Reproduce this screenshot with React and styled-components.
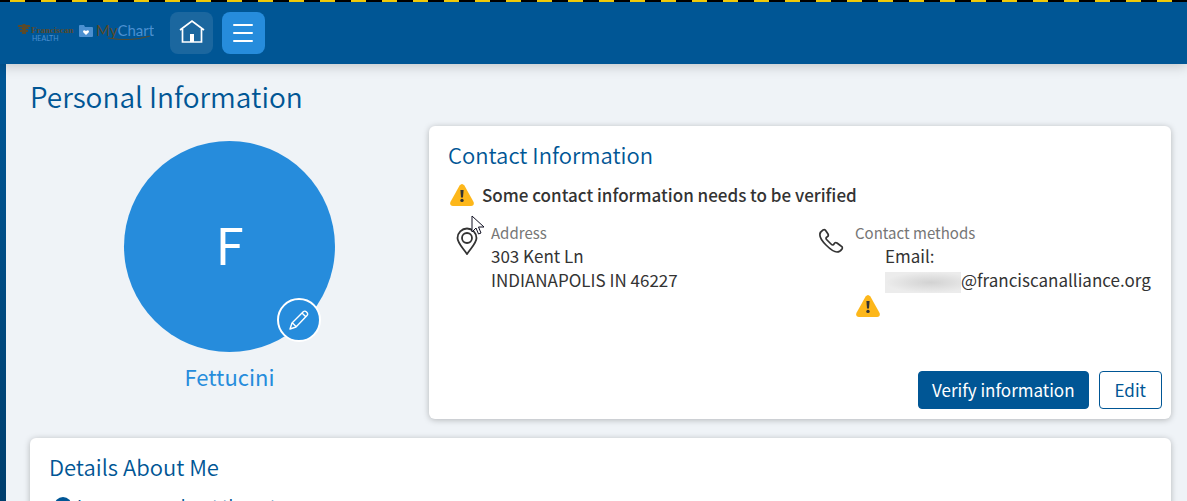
import React from "react";
import styled, { createGlobalStyle } from "styled-components";

const Global = createGlobalStyle`
  *, *::before, *::after { box-sizing: border-box; }
  html { scrollbar-width: none; }
  body {
    margin: 0;
    font-family: "Noto Sans CJK SC", "Noto Sans", sans-serif;
    font-size: 17px;
    line-height: 24px;
    color: #333;
    background: #eff3f7;
  }
  h1, h2, p { margin: 0; font-weight: 400; }
  button { font-family: inherit; cursor: pointer; }
`;

const Page = styled.div`
  min-height: 100vh;
  border-left: 6px solid;
  border-image: linear-gradient(#005695 15%, #003a66) 1;
`;

const Stripes = styled.div`
  height: 2px;
  margin-left: -6px;
  background: repeating-linear-gradient(90deg, #000 0 10px, #ffd60a 10px 25px, #000 25px 31px);
`;

const TopBar = styled.header`
  display: flex;
  align-items: center;
  gap: 9px;
  height: 62px;
  margin-left: -6px;
  padding: 0 17px;
  background: #005695;
  box-shadow: 0 2px 12px rgba(0, 0, 0, 0.2);
`;

const Brand = styled.a`
  display: flex;
  align-items: center;
  margin-right: 7px;
`;

const NavButton = styled.button`
  display: grid;
  place-items: center;
  width: 43px;
  height: 42px;
  padding: 0;
  border: 0;
  border-radius: 8px;
  color: #fff;
  background: ${(p) => (p.$active ? "#268cdc" : "#1b679f")};
`;

const Content = styled.main`
  display: flex;
  flex-direction: column;
  padding: 12px 16px 24px 24px;
`;

const PageTitle = styled.h1`
  font-size: 28px;
  font-weight: 350;
  line-height: 40px;
  color: #005695;
`;

const Summary = styled.div`
  display: grid;
  grid-template-columns: 399px 1fr;
  margin: 10px 0 19px;
`;

const Profile = styled.section`
  display: flex;
  flex-direction: column;
  align-items: center;
  padding-top: 15px;
`;

const Avatar = styled.div`
  position: relative;
  display: grid;
  place-items: center;
  width: 211px;
  height: 211px;
  padding-bottom: 8px;
  border-radius: 50%;
  background: #268cdc;
  color: #fff;
  font-size: 51px;
  line-height: 64px;
`;

const EditPhoto = styled.button`
  position: absolute;
  right: 14px;
  bottom: 10px;
  display: grid;
  place-items: center;
  width: 44px;
  height: 44px;
  padding: 0;
  border: 2px solid #fff;
  border-radius: 50%;
  background: #268cdc;
  color: #fff;
`;

const ProfileName = styled.p`
  margin-top: 8px;
  font-size: 22px;
  line-height: 32px;
  color: #268cdc;
`;

const Card = styled.section`
  display: flex;
  flex-direction: column;
  min-height: ${(p) => p.$minHeight || 0}px;
  padding: 12px 9px 10px 19px;
  border-radius: 6px;
  background: #fff;
  box-shadow: 0 1px 6px rgba(0, 0, 0, 0.25);
`;

const CardTitle = styled.h2`
  font-size: 22px;
  font-weight: 350;
  line-height: 32px;
  color: #005695;
`;

const Alert = styled.p`
  display: flex;
  align-items: center;
  gap: 7px;
  margin: 13px 0 0 1px;
  font-weight: 500;
`;

const Columns = styled.div`
  display: grid;
  grid-template-columns: 364px 1fr;
  margin-top: 14px;
`;

const Detail = styled.div`
  display: grid;
  grid-template-columns: 36px 1fr;
  padding-left: 7px;

  > svg { margin-top: 6px; }
`;

const Label = styled.p`
  font-size: 15px;
  line-height: 23px;
  color: #767676;
`;

const Email = styled.div`
  margin-bottom: 1px;
  padding-left: 30px;
`;

const Redacted = styled.span`
  display: inline-block;
  width: 76px;
  height: 21px;
  vertical-align: middle;
  background: radial-gradient(ellipse at 60% 50%, #d2d2d2, #ececec 70%);
`;

const Actions = styled.div`
  display: flex;
  justify-content: flex-end;
  gap: 10px;
  margin-top: auto;
`;

const Button = styled.button`
  height: 38px;
  padding: 0 ${(p) => (p.$primary ? 13 : 15)}px;
  border: 1px solid #005695;
  border-radius: 4px;
  font-size: 17px;
  line-height: 24px;
  color: ${(p) => (p.$primary ? "#fff" : "#005695")};
  background: ${(p) => (p.$primary ? "#005695" : "#fff")};
`;

const InfoLink = styled.a`
  display: flex;
  align-items: center;
  gap: 5px;
  margin: 12px 0 20px 5px;
  color: #005695;
  text-decoration: none;
`;

const Pointer = styled.svg`
  position: absolute;
  left: 471px;
  top: 215px;
  pointer-events: none;
`;

const WarningIcon = () => (
  <svg width="26" height="24" viewBox="0 0 26 24" aria-hidden="true">
    <path d="M10.6 2.6Q13-.4 15.4 2.6L24.6 19Q25.6 23 22 23H4Q.4 23 1.4 19Z" fill="#fdb71a" />
    <path d="M11.4 7h3.2l-.6 7.4h-2z" fill="#333" />
    <circle cx="13" cy="17.4" r="1.7" fill="#333" />
  </svg>
);

const BrandLogo = () => (
  <svg width="137" height="22" viewBox="0 0 137 22" role="img" aria-label="Franciscan Health MyChart">
    <g fill="#594a2b">
      <path d="M1 3h4l1-1h2l1 1h4v2h-2v1h1v1H9v1h2v2H9v2H5v-2H3V8h2V7H2V6h3V5H1z" />
      <text x="14" y="11" fontFamily="Liberation Serif, serif" fontWeight="700" fontSize="9">Franciscan</text>
    </g>
    <text x="15" y="19" fontFamily="Lato, sans-serif" fontSize="7" fill="#4b90d1">HEALTH</text>
    <path d="M62 4q0-1 1-1h4l1 2h7q1 0 1 1v8q0 1-1 1H63q-1 0-1-1z" fill="#4b90d1" />
    <text x="79" y="14" fontFamily="Lato, sans-serif" fontSize="15" fill="#594a2b">
      My<tspan fill="#4b90d1">Chart</tspan>
    </text>
    <path d="M69 13l-3-3q0-3 3-1q3-2 3 1z" fill="#fff" />
    <path d="M91 16q22 4 42-2" fill="none" stroke="#594a2b" />
  </svg>
);

export default function App() {
  return (
    <Page>
      <Global />
      <Stripes />
      <TopBar>
        <Brand href="#home"><BrandLogo /></Brand>
        <NavButton aria-label="Home">
          <svg width="26" height="30" viewBox="0 0 26 30" fill="none" stroke="#fff">
            <path d="M1 12 13 3l12 9M3.500 11v13h19V11" strokeWidth="1.700" />
            <path d="M11 16h4v8h-4z" fill="#fff" stroke="none" />
          </svg>
        </NavButton>
        <NavButton $active aria-label="Menu">
          <svg width="22" height="18" viewBox="0 0 22 18" stroke="#fff" strokeWidth="2" strokeLinecap="round">
            <path d="M1 1h18M1 9h18M1 17h18" />
          </svg>
        </NavButton>
      </TopBar>
      <Content>
        <PageTitle>Personal Information</PageTitle>
        <Summary>
          <Profile>
            <Avatar>
              F
              <EditPhoto aria-label="Edit photo">
                <svg width="20" height="20" viewBox="0 0 20 20" fill="none" stroke="#fff" strokeWidth="1.400" strokeLinejoin="round">
                  <path d="M1 19l2-6L14.500 1.500q1.500-1 3 .5q2 2 .5 3.500L7 17zM3.500 13l3.500 3.500M13 3l4 4" />
                </svg>
              </EditPhoto>
            </Avatar>
            <ProfileName>Fettucini</ProfileName>
          </Profile>
          <Card $minHeight={293}>
            <CardTitle>Contact Information</CardTitle>
            <Alert><WarningIcon />Some contact information needs to be verified</Alert>
            <Columns>
              <Detail>
                <svg width="24" height="28" viewBox="0 0 24 28" fill="none" stroke="#333" strokeWidth="1.800">
                  <path d="M12 27C8 21 2.500 16 2.500 11a9.500 9.500 0 0 1 19 0c0 5-5.500 10-9.500 16z" />
                  <circle cx="12" cy="11" r="5" />
                </svg>
                <div>
                  <Label>Address</Label>
                  <p>303 Kent Ln</p>
                  <p>INDIANAPOLIS IN 46227</p>
                </div>
              </Detail>
              <Detail>
                <svg width="26" height="28" viewBox="0 0 26 28" fill="none" stroke="#333" strokeWidth="1.700" strokeLinejoin="round">
                  <path d="M1 7q0-2 3-4 2-1 3 1l2 3q1 2-1 3-2 1 0 3l4 4q2 2 3 0 1-2 3-1l4 3q2 1 1 3-2 3-5 3Q14 25 7 18T1 7z" />
                </svg>
                <div>
                  <Label>Contact methods</Label>
                  <Email>
                    <p>Email:</p>
                    <p><Redacted />@franciscanalliance.org</p>
                  </Email>
                  <WarningIcon />
                </div>
              </Detail>
            </Columns>
            <Actions>
              <Button $primary>Verify information</Button>
              <Button>Edit</Button>
            </Actions>
          </Card>
        </Summary>
        <Card>
          <CardTitle>Details About Me</CardTitle>
          <InfoLink href="#learn">
            <svg width="18" height="18" viewBox="0 0 18 18"><circle cx="9" cy="9" r="9" fill="#005695" /></svg>
            Learn more about the category
          </InfoLink>
        </Card>
      </Content>
      <Pointer width="14" height="21" viewBox="0 0 14 21" aria-hidden="true">
        <path d="M1 1v16l4-4 2.500 6 2.500-1-2.500-6H13z" fill="#fff" stroke="#111122" />
      </Pointer>
    </Page>
  );
}
